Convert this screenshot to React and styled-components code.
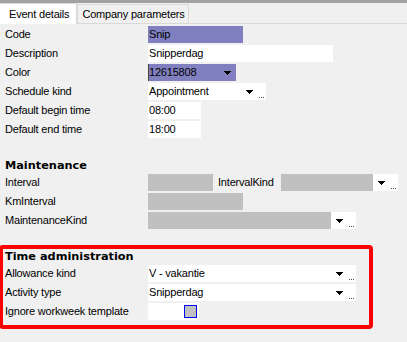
import styled, { createGlobalStyle } from "styled-components";

const GlobalStyle = createGlobalStyle`
  body {
    margin: 0;
    background: #f0f0f0;
    font-family: "Liberation Sans", Arial, sans-serif;
    font-size: 11px;
    letter-spacing: -0.2px;
    color: #000;
  }
`

const PURPLE = "#8080c0"
const GRAY = "#c0c0c0"
const WHITE = "#ffffff"

export default function App() {
    return (
        <Page>
            <GlobalStyle />
            <TopBar />
            <TabStrip>
                <Tab $active>Event details</Tab>
                <Tab>Company parameters</Tab>
            </TabStrip>
            <Form>
                <Row>
                    <Label>Code</Label>
                    <Field $w={95} $bg={PURPLE}>Snip</Field>
                </Row>
                <Row>
                    <Label>Description</Label>
                    <Field $w={185} $bg={WHITE}>Snipperdag</Field>
                </Row>
                <Row>
                    <Label>Color</Label>
                    <Combo w={88} text="12615808" bg={PURPLE} btnBg={PURPLE} btn={17} swatch />
                </Row>
                <Row>
                    <Label>Schedule kind</Label>
                    <Combo w={118} text="Appointment" bg={WHITE} btnBg={WHITE} dots />
                </Row>
                <Row>
                    <Label>Default begin time</Label>
                    <Field $w={53} $bg={WHITE}>08:00</Field>
                </Row>
                <Row>
                    <Label>Default end time</Label>
                    <Field $w={53} $bg={WHITE}>18:00</Field>
                </Row>

                <Heading $top={20}>Maintenance</Heading>
                <Row>
                    <Label>Interval</Label>
                    <Field $w={65} $bg={GRAY} />
                    <Label $w={68} $pad={5}>IntervalKind</Label>
                    <Combo w={117} bg={GRAY} btnBg={WHITE} dots />
                </Row>
                <Row>
                    <Label>KmInterval</Label>
                    <Field $w={95} $bg={GRAY} />
                </Row>
                <Row>
                    <Label>MaintenanceKind</Label>
                    <Combo w={208} bg={GRAY} btnBg={WHITE} dots />
                </Row>

                <Highlight>
                    <Heading $top={0} $pad={2}>Time administration</Heading>
                    <Row>
                        <Label $w={145} $pad={2}>Allowance kind</Label>
                        <Combo w={208} text="V - vakantie" bg={WHITE} btnBg={WHITE} dots />
                    </Row>
                    <Row>
                        <Label $w={145} $pad={2}>Activity type</Label>
                        <Combo w={208} text="Snipperdag" bg={WHITE} btnBg={WHITE} dots />
                    </Row>
                    <Row>
                        <Label $w={145} $pad={2}>Ignore workweek template</Label>
                        <CheckField>
                            <CheckBox />
                        </CheckField>
                    </Row>
                </Highlight>
            </Form>
        </Page>
    )
}

function Combo({ w, text, bg, btnBg, btn = 25, dots, swatch }) {
    return (
        <ComboBox style={{ width: w }}>
            <ComboText $bg={bg} $swatch={swatch}>{text}</ComboText>
            <ComboButton $bg={btnBg} $w={btn}>
                <svg width={btn} height="17" viewBox={`0 0 ${btn} 17`}>
                    <rect x="5" y="7" width="7" height="1" fill="#000" />
                    <rect x="6" y="8" width="5" height="1" fill="#000" />
                    <rect x="7" y="9" width="3" height="1" fill="#000" />
                    <rect x="8" y="10" width="1" height="1" fill="#000" />
                    {dots && (
                        <g fill="#505050">
                            <rect x="18" y="14" width="1" height="1" />
                            <rect x="20" y="14" width="1" height="1" />
                            <rect x="22" y="14" width="1" height="1" />
                        </g>
                    )}
                </svg>
            </ComboButton>
        </ComboBox>
    )
}

const Page = styled.div`
    width: 407px;
    height: 342px;
    overflow: hidden;
`

const TopBar = styled.div`
    height: 3px;
    background: #a2a2a2;
`

const TabStrip = styled.div`
    display: flex;
    align-items: flex-end;
    height: 20px;
    border-bottom: 1px solid #d9d9d9;
`

const Tab = styled.div`
    box-sizing: border-box;
    height: ${p => p.$active ? "21px" : "19px"};
    margin-bottom: ${p => p.$active ? "-1px" : "0"};
    padding: ${p => p.$active ? "4px 7px 0 9px" : "3px 3px 0 4px"};
    line-height: 13px;
    background: ${p => p.$active ? "#ffffff" : "#f0f0f0"};
    border: 1px solid #d9d9d9;
    border-left: ${p => p.$active ? "none" : "1px solid #d9d9d9"};
    border-bottom: none;
    white-space: nowrap;
`

const Form = styled.div`
    padding-top: 2px;
`

const Row = styled.div`
    display: flex;
    height: 17px;
    margin-bottom: 2px;
`

const Label = styled.div`
    box-sizing: border-box;
    flex: none;
    width: ${p => p.$w || 148}px;
    padding-left: ${p => p.$pad ?? 5}px;
    line-height: 17px;
    white-space: nowrap;
`

const Field = styled.div`
    box-sizing: border-box;
    flex: none;
    width: ${p => p.$w}px;
    padding-left: 1px;
    background: ${p => p.$bg};
    line-height: 17px;
    white-space: nowrap;
    overflow: hidden;
`

const ComboBox = styled.div`
    display: flex;
    flex: none;
`

const ComboText = styled.div`
    flex: 1;
    box-sizing: border-box;
    padding-left: ${p => p.$swatch ? "0" : "1px"};
    background: ${p => p.$bg};
    border-left: ${p => p.$swatch ? "1px solid #4a4038" : "none"};
    line-height: 17px;
    white-space: nowrap;
    overflow: hidden;
`

const ComboButton = styled.div`
    flex: none;
    width: ${p => p.$w}px;
    height: 17px;
    background: ${p => p.$bg};
    svg {
        display: block;
    }
`

const Heading = styled.div`
    margin-top: ${p => p.$top}px;
    padding-left: ${p => p.$pad ?? 5}px;
    height: 16px;
    line-height: 16px;
    font-family: "DejaVu Sans", Verdana, sans-serif;
    font-weight: bold;
    font-size: 11.3px;
    letter-spacing: 0;
    color: #000;
`

const Highlight = styled.div`
    box-sizing: border-box;
    width: 374px;
    margin: 16px 0 0 -1px;
    padding-bottom: 3px;
    border: 4px solid #ff0000;
    border-radius: 4px;
`

const CheckField = styled.div`
    display: flex;
    justify-content: flex-end;
    align-items: flex-start;
    box-sizing: border-box;
    width: 51px;
    padding: 2px 2px 0 0;
    background: #ffffff;
`

const CheckBox = styled.div`
    box-sizing: border-box;
    width: 13px;
    height: 13px;
    border: 1px solid #0000ff;
    background: #c0c0c0;
`
